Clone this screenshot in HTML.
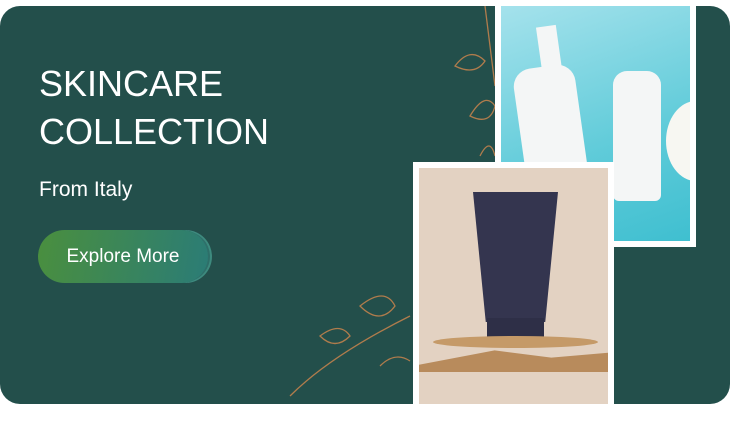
<!DOCTYPE html>
<html><head><style>
html,body{margin:0;padding:0;background:#fff;}
body{width:730px;height:410px;position:relative;overflow:hidden;font-family:"Liberation Sans",sans-serif;}
.card{position:absolute;left:0;top:6px;width:730px;height:398px;background:#234f4b;border-radius:20px;overflow:hidden;}
.h{position:absolute;left:39px;top:54px;color:#fff;font-size:36px;line-height:48px;letter-spacing:0;}
.sub{position:absolute;left:39px;top:172px;color:#fff;font-size:21px;}
.btn{position:absolute;left:38px;top:224px;width:170px;height:53px;border-radius:27px;background:linear-gradient(100deg,#4a8f3e,#2b7c76);color:#fff;font-size:19px;line-height:53px;text-align:center;box-shadow:3px 0 0 -1px #2e6f69, 4px 0 0 0 #3d8a7e;}
.f1{position:absolute;left:495px;top:0;width:201px;height:247px;background:#fff;}
.i1{position:absolute;left:6px;top:6px;width:189px;height:235px;background:linear-gradient(160deg,#a5e2ec,#5fcbd9 60%,#3fbfd0);overflow:hidden;}
.f2{position:absolute;left:413px;top:162px;width:201px;height:260px;background:#fff;}
.i2{position:absolute;left:6px;top:6px;width:189px;height:236px;background:#e3d2c2;overflow:hidden;}
</style></head><body>
<div class="card">
<svg width="730" height="398" style="position:absolute;left:0;top:0" fill="none" stroke="#b07c4c" stroke-width="1.3">
<path d="M455 60 q15 -20 30 -5 q-10 15 -30 5z M470 110 q15 -25 25 -10 q-5 20 -25 10z M485 0 q5 40 10 80 M480 150 q10 -20 15 0"/>
<path d="M320 330 q20 -15 30 0 q-15 15 -30 0z M360 300 q25 -20 35 0 q-15 20 -35 0z M290 390 q40 -40 120 -80 M380 360 q15 -15 30 -5"/>
</svg>
<div class="h">SKINCARE<br>COLLECTION</div>
<div class="sub">From Italy</div>
<div class="btn">Explore More</div>
</div>
<div class="f1"><div class="i1">
<div style="position:absolute;left:22px;top:60px;width:62px;height:170px;background:#f4f6f6;border-radius:18px 18px 6px 6px;transform:rotate(-8deg)"></div>
<div style="position:absolute;left:38px;top:20px;width:20px;height:45px;background:#f4f6f6;transform:rotate(-8deg)"></div>
<div style="position:absolute;left:112px;top:65px;width:48px;height:130px;background:#f4f6f6;border-radius:14px 14px 6px 6px;"></div>
<div style="position:absolute;left:165px;top:95px;width:60px;height:80px;background:#f7f7f2;border-radius:50%;"></div>
</div></div>
<div class="f2"><div class="i2">
<div style="position:absolute;left:54px;top:24px;width:85px;height:130px;background:#34354f;clip-path:polygon(0 0,100% 0,85% 100%,15% 100%);"></div>
<div style="position:absolute;left:68px;top:150px;width:57px;height:26px;background:#2e2f47;"></div>
<div style="position:absolute;left:14px;top:168px;width:165px;height:12px;background:#c59a68;border-radius:50%;"></div>
<div style="position:absolute;left:0;top:180px;width:189px;height:24px;background:#b88b5c;clip-path:polygon(0 70%,40% 10%,70% 40%,100% 20%,100% 100%,0 100%);"></div>
</div></div>
</body></html>
